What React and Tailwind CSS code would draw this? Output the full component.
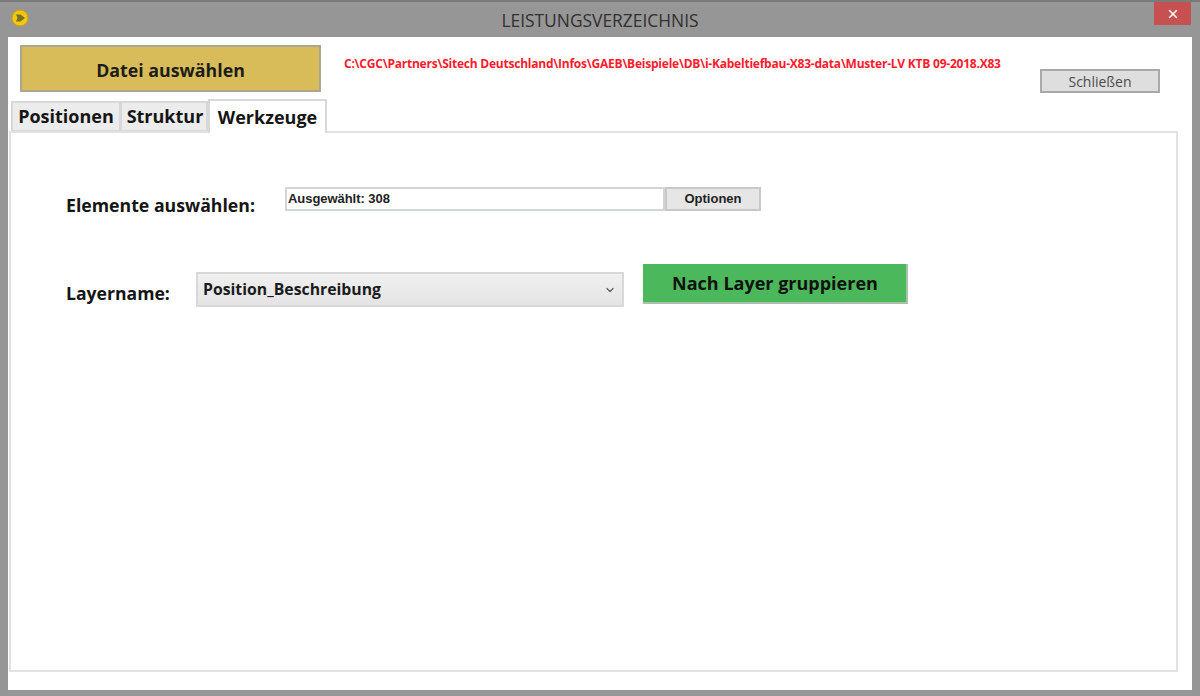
import React from "react";
import { ChevronDown, X } from "lucide-react";

const AppIcon = () => (
  <svg width="18" height="18" viewBox="0 0 18 18">
    <circle cx="9" cy="9" r="8" fill="#f2c80f" stroke="#c9a106" strokeWidth="1" />
    <path d="M5 5.5 L9.5 5.5 L14 9 L9.5 12.5 L5 12.5 L6.5 9 Z" fill="#77702a" />
  </svg>
);

const Tab = ({ label, active, className }) => (
  <div
    className={`flex items-center justify-center font-bold text-[18px] text-[#151515] border-t-2 border-l-2 border-r-2 border-[#d8d8d8] ${
      active ? "h-[34px] bg-white relative top-px z-10" : "h-[31px] bg-[#ececec] border-b-2"
    } ${className}`}
  >
    {label}
  </div>
);

export default function App() {
  return (
    <div className="w-[1200px] h-[696px] bg-[#969696] border-t-2 border-[#7b7b7b] flex flex-col overflow-hidden font-['Open_Sans','Noto_Sans',sans-serif]">
      <div className="h-[35px] shrink-0 flex items-start relative">
        <div className="ml-[11px] mt-[7px]">
          <AppIcon />
        </div>
        <div className="absolute left-0 right-0 top-[7px] text-center text-[17.4px] leading-[22px] text-[#303030]">
          LEISTUNGSVERZEICHNIS
        </div>
        <div className="absolute right-[9px] top-0 w-[37px] h-[23px] bg-[#c75050] flex items-center justify-center">
          <X size={14} strokeWidth={2.5} className="text-white" />
        </div>
      </div>

      <div className="mx-[8px] mb-[6px] flex-1 bg-white flex flex-col min-h-0">
        <div className="h-[62px] shrink-0 flex items-start pt-[8px] relative">
          <button className="ml-[12px] w-[301px] h-[47px] pt-[3px] bg-[#d8bc5a] border-2 border-[#aaa68f] font-bold text-[17.8px] text-[#1c1c1c]">
            Datei auswählen
          </button>
          <div className="ml-[23px] mt-[10px] text-[12px] leading-[18px] font-bold text-[#ff1a2e] whitespace-nowrap tracking-[-0.226px]">
            {"C:\\CGC\\Partners\\Sitech Deutschland\\Infos\\GAEB\\Beispiele\\DB\\i-Kabeltiefbau-X83-data\\Muster-LV KTB 09-2018.X83"}
          </div>
          <button className="absolute left-[1032px] top-[32px] w-[120px] h-[24px] bg-[#dedede] border-2 border-[#a9a9a9] text-[14px] text-[#4c4c4c]">
            Schließen
          </button>
        </div>

        <div className="flex items-end pl-[3px] h-[33px] shrink-0">
          <Tab label="Positionen" className="w-[110px]" />
          <Tab label="Struktur" className="w-[88px] -ml-px pl-[2px]" />
          <Tab label="Werkzeuge" active className="w-[119px]" />
        </div>

        <div className="ml-px mr-[14px] mb-[18px] flex-1 border-2 border-[#e2e2e2] -mt-px pl-[54px] pt-[54px]">
          <div className="flex items-start">
            <div className="w-[220px] mt-[5px] pl-px font-bold text-[17.7px] leading-[26px] text-[#151515]">
              Elemente auswählen:
            </div>
            <div className="w-[380px] h-[24px] border-2 border-[#d3d3da] pl-px flex items-center text-[13px] font-bold tracking-[-0.05px] text-[#222222] font-['Liberation_Sans',sans-serif]">
              Ausgewählt: 308
            </div>
            <button className="w-[96px] h-[24px] bg-[#e6e6e6] border-2 border-[#c8c8c8] text-[13px] font-bold text-[#222222] font-['Liberation_Sans',sans-serif]">
              Optionen
            </button>
          </div>

          <div className="flex items-start mt-[46px]">
            <div className="w-[131px] mt-[16px] pl-px font-bold text-[17.6px] leading-[26px] text-[#151515]">
              Layername:
            </div>
            <div className="w-[428px] h-[35px] mt-[8px] bg-gradient-to-b from-[#f0f0f0] to-[#e4e4e4] border-2 border-[#d8d8d8] pl-[5px] pr-[6px] flex items-center justify-between font-bold text-[15.8px] text-[#1c1c1c]">
              <span>Position_Beschreibung</span>
              <ChevronDown size={12} strokeWidth={2.5} className="text-[#606060]" />
            </div>
            <button className="ml-[19px] w-[265px] h-[40px] pl-px bg-[#4cb85c] border-b-2 border-r-2 border-[#a8c0ac] font-bold text-[18px] text-[#111111]">
              Nach Layer gruppieren
            </button>
          </div>
        </div>
      </div>
    </div>
  );
}
